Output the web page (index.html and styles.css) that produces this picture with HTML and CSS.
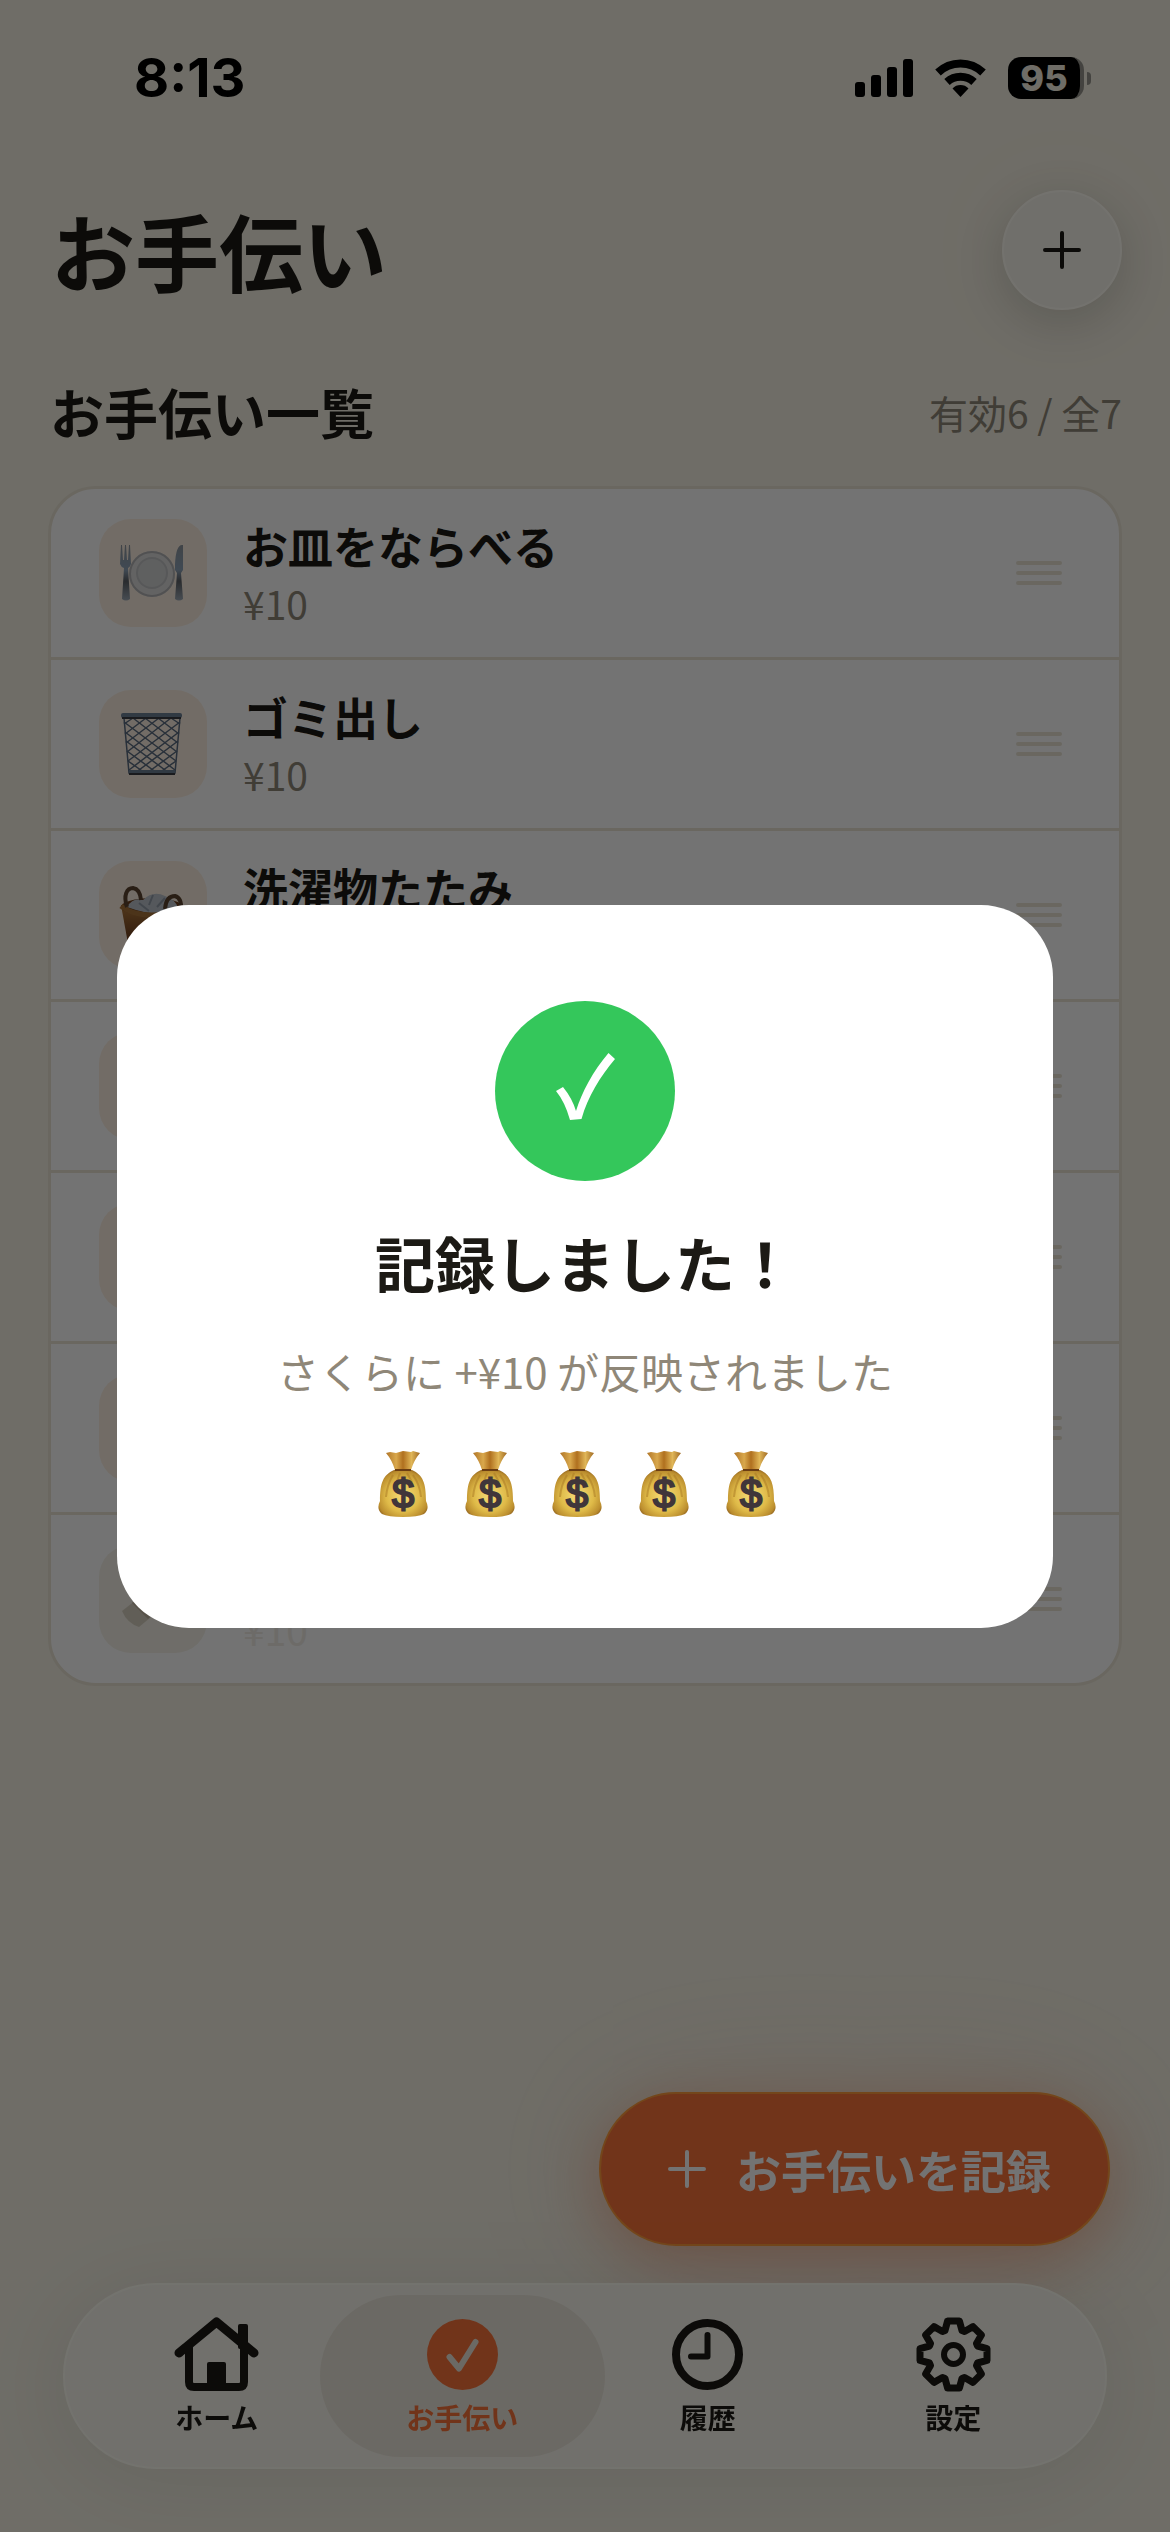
FILE: index.html
```html
<!DOCTYPE html>
<html lang="ja">
<head>
<meta charset="utf-8">
<meta name="viewport" content="width=device-width, initial-scale=1">
<title>お手伝い</title>
<link rel="stylesheet" href="styles.css">
</head>
<body>
<svg class="defs" aria-hidden="true">
  <defs>
    <linearGradient id="steel" x1="0" y1="0" x2="0" y2="1">
      <stop offset="0" stop-color="#8e969e"/><stop offset=".45" stop-color="#8fa4ba"/><stop offset=".65" stop-color="#5c6066"/><stop offset="1" stop-color="#9fabb8"/>
    </linearGradient>
    <linearGradient id="wicker" x1="0" y1="0" x2="0" y2="1">
      <stop offset="0" stop-color="#b37a3c"/><stop offset="1" stop-color="#5a2d16"/>
    </linearGradient>
    <radialGradient id="gold" cx=".5" cy=".55" r=".62">
      <stop offset="0" stop-color="#f5dc78"/><stop offset=".55" stop-color="#dfba48"/><stop offset=".85" stop-color="#bb8d2e"/><stop offset="1" stop-color="#7d4f18"/>
    </radialGradient>
    <linearGradient id="neck" x1="0" y1="0" x2="1" y2="0">
      <stop offset="0" stop-color="#b07528"/><stop offset=".3" stop-color="#d9a84c"/><stop offset=".5" stop-color="#b0701f"/><stop offset=".75" stop-color="#e0b657"/><stop offset="1" stop-color="#a06a24"/>
    </linearGradient>
    <symbol id="grip" viewBox="0 0 46 26">
      <path d="M2 3H44M2 13H44M2 23H44" fill="none" stroke="currentColor" stroke-width="4" stroke-linecap="round"/>
    </symbol>
    <symbol id="plus" viewBox="0 0 38 38">
      <path d="M19 2V36M2 19H36" fill="none" stroke="currentColor" stroke-width="4" stroke-linecap="round"/>
    </symbol>
    <symbol id="bag" viewBox="0 0 50 66">
      <path d="M8 2 12 1 18 2 25 0 33 1 35 0 42 2Q36 9 33 19H17Q14 9 8 2Z" fill="url(#neck)"/>
      <path d="M16 19H34C45 24 48 32 48 50Q52 58 46 63Q40 66 25 66T4 63Q-2 58 2 50C2 32 5 24 16 19Z" fill="url(#gold)"/>
      <path d="M17 19H33" stroke="#6b3d12" stroke-width="2"/>
      <path d="M15 24Q9 34 8 46M35 24Q42 34 43 46M22 22 19 30M29 22 34 31" fill="none" stroke="#a87823" stroke-opacity=".5" stroke-width="2"/>
      <text x="25" y="57" class="bag-sign">$</text>
    </symbol>
  </defs>
</svg>

<div class="screen">
  <div class="status">
    <span class="clock">8:13</span>
    <div class="status-icons">
      <svg width="58" height="38" viewBox="0 0 58 38" aria-hidden="true"><rect y="23" width="10" height="15" rx="3"/><rect x="16" y="16" width="10" height="22" rx="3"/><rect x="32" y="8" width="10" height="30" rx="3"/><rect x="48" width="10" height="38" rx="3"/></svg>
      <svg width="51" height="38" viewBox="0 0 51 38" aria-hidden="true"><g fill="none" stroke="#000" stroke-width="8"><path d="M3 13.500A32.500 32.500 0 0 1 48 13.500"/><path d="M12 23A20 20 0 0 1 39 23"/></g><path d="M25.500 38 17.500 29.500A11 11 0 0 1 33.500 29.500Z"/></svg>
      <div class="battery"><span class="level">95</span><span class="nub"></span></div>
    </div>
  </div>

  <header class="top">
    <h1>お手伝い</h1>
    <button class="add" type="button" aria-label="追加"><svg width="38" height="38" aria-hidden="true"><use href="#plus"/></svg></button>
  </header>

  <main>
    <div class="section-head">
      <h2>お手伝い一覧</h2>
      <span class="count">有効6 / 全7</span>
    </div>
    <ul class="chores">
      <li>
        <span class="tile"><svg viewBox="0 0 108 108" aria-hidden="true">
          <circle cx="53" cy="55" r="23" fill="#dcdcdc"/><circle cx="53" cy="55" r="22" fill="none" stroke="#b4b4b6" stroke-width="2"/><circle cx="53" cy="54" r="16" fill="#c2c3c5"/><circle cx="53" cy="54" r="14" fill="#d3d4d5"/>
          <path d="M21 45 22 26H23L24 41H25L26 26H27L28 41H29L30 26H31L32 45Q31 48 29 49L31 80Q27 83 23 80L25 49Q22 48 21 45Z" fill="url(#steel)"/>
          <path d="M83 26Q77 26 76 45V51L78 54 76 80Q80 83 84 80L82 54 84 51V26Z" fill="url(#steel)"/></svg></span>
        <div class="info"><span class="name">お皿をならべる</span><span class="price">¥10</span></div>
        <svg class="grip" aria-hidden="true"><use href="#grip"/></svg>
      </li>
      <li>
        <span class="tile"><svg viewBox="0 0 108 108" aria-hidden="true">
          <g fill="none" stroke="#5a6b80" stroke-width="1.500">
            <path d="M25 28 30 83H76L81 28"/>
            <path d="M25 34 34 28M26 44 47 28M27 53 60 28M28 62 72 28M29 71 81 32M30 80 80 42M36 83 79 51M48 83 78 61M60 83 77 71"/>
            <path d="M81 34 72 28M80 44 59 28M79 53 46 28M78 62 34 28M77 71 25 32M76 80 26 42M70 83 27 51M58 83 28 61M46 83 29 71"/></g>
          <rect x="22" y="23" width="61" height="5" rx="2" fill="#6e8096"/><path d="M23 28H82" stroke="#3a3d44" stroke-width="2"/><path d="M30 82H76" stroke="#6e8096" stroke-width="4"/><path d="M30 84H76" stroke="#3a3d44" stroke-width="2"/></svg></span>
        <div class="info"><span class="name">ゴミ出し</span><span class="price">¥10</span></div>
        <svg class="grip" aria-hidden="true"><use href="#grip"/></svg>
      </li>
      <li>
        <span class="tile"><svg viewBox="0 0 108 108" aria-hidden="true">
          <path d="M22 44 30 88H76L84 46Z" fill="url(#wicker)"/>
          <ellipse cx="53" cy="46" rx="31" ry="9" fill="#6b3d1c"/>
          <path d="M28 46Q34 36 44 39 54 29 66 35 76 38 80 48 60 58 28 46Z" fill="#bcc3cc"/>
          <path d="M40 42 50 50M54 34 50 44M66 37 58 46" stroke="#929ca8" stroke-width="2"/>
          <path d="M22 45Q40 60 84 50" fill="none" stroke="#a8733a" stroke-width="5"/>
          <path d="M28 46C24 34 28 27 34 27Q41 28 42 39M66 48Q67 35 76 35 83 37 82 49" fill="none" stroke="#5b4330" stroke-width="4"/></svg></span>
        <div class="info"><span class="name">洗濯物たたみ</span></div>
        <svg class="grip" aria-hidden="true"><use href="#grip"/></svg>
      </li>
      <li><span class="tile"></span><svg class="grip" aria-hidden="true"><use href="#grip"/></svg></li>
      <li><span class="tile"></span><svg class="grip" aria-hidden="true"><use href="#grip"/></svg></li>
      <li><span class="tile"></span><svg class="grip" aria-hidden="true"><use href="#grip"/></svg></li>
      <li class="paused">
        <span class="tile"><svg viewBox="0 0 108 108" aria-hidden="true"><path d="M23 66 50 45 64 62 40 82Q28 78 23 66Z" fill="#d8d1c1"/><path d="M34 57 50 73" stroke="#c2b7a2" stroke-width="3"/></svg></span>
        <div class="info"><span class="name"></span><span class="price">¥10</span></div>
        <svg class="grip" aria-hidden="true"><use href="#grip"/></svg>
      </li>
    </ul>
  </main>

  <button class="record" type="button"><svg width="38" height="38" aria-hidden="true"><use href="#plus"/></svg>お手伝いを記録</button>

  <nav class="tabs">
    <a href="#home"><svg width="85" height="75" viewBox="0 0 85 75" aria-hidden="true"><path d="M5 36 42.500 5 80 36" fill="none" stroke="currentColor" stroke-width="9" stroke-linecap="round" stroke-linejoin="round"/><path d="M15 29V65Q15 70 20 70H65Q70 70 70 65V29" fill="none" stroke="currentColor" stroke-width="8"/><rect x="33" y="45" width="19" height="27" rx="2"/><rect x="64" y="7" width="10" height="25" rx="2"/></svg>ホーム</a>
    <a href="#chores" class="active" aria-current="page"><svg width="71" height="75" viewBox="0 -2 71 75" aria-hidden="true"><circle cx="35.500" cy="35.500" r="35.500"/><path d="M22.500 38 32 49.500 48.500 23" fill="none" stroke="#eee9dd" stroke-width="6" stroke-linecap="round" stroke-linejoin="round"/></svg>お手伝い</a>
    <a href="#history"><svg width="71" height="75" viewBox="0 -2 71 75" aria-hidden="true"><g fill="none" stroke="currentColor" stroke-linecap="round" stroke-linejoin="round"><circle cx="35.500" cy="35.500" r="31.500" stroke-width="8"/><path d="M35.500 16V37.500H19" stroke-width="6"/></g></svg>履歴</a>
    <a href="#settings"><svg width="75" height="75" viewBox="-37.500 -37.500 75 75" aria-hidden="true"><g fill="none" stroke="currentColor" stroke-width="7" stroke-linejoin="round"><path d="M-8.500-24-5.900-33.500 5.900-33.500 8.500-24 11-23 19.500-27.900 27.900-19.500 23-11 24-8.500 33.500-5.900 33.500 5.900 24 8.500 23 11 27.900 19.500 19.500 27.900 11 23 8.500 24 5.900 33.500-5.900 33.500-8.500 24-11 23-19.500 27.900-27.900 19.500-23 11-24 8.500-33.500 5.900-33.500-5.900-24-8.500-23-11-27.900-19.500-19.500-27.900-11-23Z"/><circle r="9.500" stroke-width="6"/></g></svg>設定</a>
  </nav>
</div>

<div class="overlay">
  <div class="dialog" role="dialog" aria-labelledby="done-title">
    <svg class="done" width="180" height="180" viewBox="0 0 180 180" aria-hidden="true"><circle cx="90" cy="90" r="90" fill="#34c75b"/><path d="M61 90 68 86Q77 97 81 110C87 91 98 70 113.500 52L120 58C105 76 93 95 86.500 118L75 119Q70 101 61 90Z" fill="#fff"/></svg>
    <h2 id="done-title">記録しました！</h2>
    <p>さくらに +¥10 が反映されました</p>
    <div class="bags" aria-hidden="true">
      <svg><use href="#bag"/></svg><svg><use href="#bag"/></svg><svg><use href="#bag"/></svg><svg><use href="#bag"/></svg><svg><use href="#bag"/></svg>
    </div>
  </div>
</div>
</body>
</html>
```
FILE: styles.css
```css
* { box-sizing: border-box; }

body {
  margin: 0;
  background: #f5f2e5;
  color: #1c1a15;
  font-family: "Noto Sans CJK JP", sans-serif;
}

h1, h2, p, ul { margin: 0; padding: 0; }
button { font: inherit; cursor: pointer; }
svg { display: block; fill: currentColor; flex: none; }
.defs { position: absolute; width: 0; height: 0; }

.screen {
  min-height: 100vh;
  display: flex;
  flex-direction: column;
  overflow: hidden;
}

/* Status bar */
.status {
  display: flex;
  align-items: center;
  justify-content: space-between;
  height: 156px;
  padding: 0 79px 0 134px;
  color: #000;
}
.clock { font: 700 54px/60px Inter, sans-serif; }
.status-icons { display: flex; align-items: center; gap: 22px; }
.battery { display: flex; align-items: center; gap: 3px; }
.level {
  width: 76px;
  height: 42px;
  border-right: 4px solid #98968e;
  border-radius: 13px;
  background: #000;
  color: #f5f2e5;
  font: 800 36px/42px Inter, sans-serif;
  text-align: center;
}
.nub { width: 4px; height: 13px; border-radius: 0 4px 4px 0; background: #98968e; }

/* Page heading */
.top {
  display: flex;
  align-items: center;
  justify-content: space-between;
  padding: 34px 48px 0 51px;
}
h1 { font-size: 84px; line-height: 120px; font-weight: 700; }
.add {
  display: grid;
  place-items: center;
  width: 120px;
  height: 120px;
  border: 2px solid #fffdf4;
  border-radius: 50%;
  background: #f9f7ee;
  color: #1c1a15;
  box-shadow: 0 12px 48px rgba(0, 0, 0, .16), 0 0 160px rgba(255, 150, 100, .08);
}

.section-head {
  display: flex;
  align-items: center;
  justify-content: space-between;
  padding: 60px 48px 32px 50px;
}
.section-head h2 { font-size: 54px; line-height: 84px; }
.count { font-size: 39px; line-height: 60px; color: #8f8778; }

/* Chore list */
.chores {
  margin: 0 48px;
  border: 3px solid #ebe5d6;
  border-radius: 48px;
  background: #fff;
  list-style: none;
}
.chores li {
  display: flex;
  align-items: center;
  gap: 36px;
  height: 168px;
  padding: 0 57px 0 48px;
}
.chores li + li { height: 171px; border-top: 3px solid #ebe5d6; }
.tile { width: 108px; height: 108px; border-radius: 32px; background: #fdf0e2; }
.info { display: flex; flex-direction: column; }
.name { height: 60px; font-size: 45px; line-height: 60px; font-weight: 700; }
.info:not(:has(.price)) { height: 114px; }
.price { font-size: 39px; line-height: 54px; color: #8f8778; }
.grip { width: 46px; height: 26px; margin-left: auto; color: #ebe5d6; }
.paused .tile { background: #f5f2e8; }
.paused .price { color: #f1eee6; }

/* Floating action */
.record {
  position: fixed;
  right: 60px;
  bottom: 286px;
  display: flex;
  align-items: center;
  gap: 30px;
  height: 154px;
  padding: 0 57px 0 67px;
  border: 2px solid #ff9c3c;
  border-radius: 77px;
  background: #fb743a;
  color: #fff;
  font-size: 45px;
  font-weight: 700;
  box-shadow: 0 14px 60px rgba(230, 90, 40, .36), 0 0 160px rgba(240, 120, 70, .12);
}

/* Tab bar */
.tabs {
  position: fixed;
  left: 63px;
  right: 63px;
  bottom: 63px;
  display: grid;
  grid-template-columns: repeat(4, 1fr);
  height: 186px;
  padding: 10px 29px;
  border: 2px solid #fffef4;
  border-radius: 93px;
  background: #faf8f0;
  box-shadow: 0 12px 90px rgba(0, 0, 0, .08);
}
.tabs a {
  display: flex;
  flex-direction: column;
  align-items: center;
  gap: 5px;
  margin: 0 -20px;
  padding-top: 22px;
  border-radius: 81px;
  color: #1c1a15;
  font-size: 28px;
  line-height: 40px;
  font-weight: 700;
  text-decoration: none;
}
.tabs .active { background: #eee9dd; color: #fb743a; }

/* Confirmation dialog */
.overlay {
  position: fixed;
  inset: 0;
  display: flex;
  align-items: center;
  justify-content: center;
  background: rgba(0, 0, 0, .55);
}
.dialog {
  display: flex;
  flex-direction: column;
  align-items: center;
  width: 80%;
  padding: 96px 48px;
  border-radius: 72px;
  background: #fff;
}
.dialog h2 { margin-top: 36px; font-size: 60px; line-height: 90px; }
.dialog p { margin-top: 34px; font-size: 42px; line-height: 60px; color: #8f8778; }
.bags { display: flex; gap: 37px; margin: 50px 0 15px; padding-right: 16px; }
.bags svg { width: 50px; height: 66px; }
.bag-sign {
  fill: #40363a;
  stroke: #40363a;
  stroke-width: 2px;
  font: 400 40px "Liberation Sans", sans-serif;
  text-anchor: middle;
}
```
